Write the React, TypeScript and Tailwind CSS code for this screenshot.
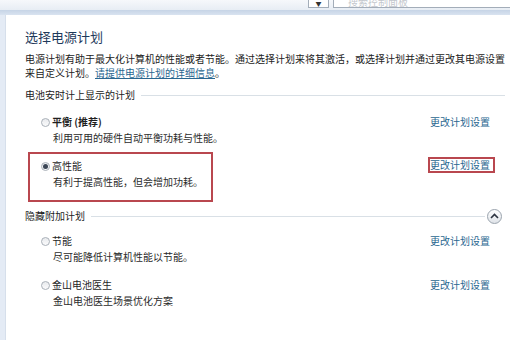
import React from "react"

const FONT = "font-['Microsoft_YaHei','Noto_Sans_CJK_SC',sans-serif]"

function Radio({ checked }: { checked?: boolean }) {
    return (
        <span className="flex items-center justify-center w-[9px] h-[9px] rounded-full border border-[#a9b0b8] bg-gradient-to-b from-[#e8eaed] to-[#fbfbfc] shrink-0">
            {checked && <span className="w-[5px] h-[5px] rounded-full bg-[#3b4656]" />}
        </span>
    )
}

function PlanLink({ boxed }: { boxed?: boolean }) {
    return (
        <span
            className={
                boxed
                    ? "block text-[10px] leading-[12px] text-[#2a6790] border-2 border-[#b9474f] pr-[3px]"
                    : "block text-[10px] leading-[14px] text-[#2a6790]"
            }
        >
            更改计划设置
        </span>
    )
}

function Plan({ name, desc, checked, bold }: { name: string; desc: string; checked?: boolean; bold?: boolean }) {
    return (
        <div className="flex flex-col">
            <div className="flex items-center gap-[2px] h-[14px]">
                <Radio checked={checked} />
                <span className={`text-[10px] leading-[14px] text-[#1f1f1f] ${bold ? 'font-bold' : ''}`}>{name}</span>
            </div>
            <div className="mt-[2px] pl-[12px] text-[10px] leading-[14px] text-[#2b2b2b] whitespace-nowrap">{desc}</div>
        </div>
    )
}

export default function App() {
    return (
        <div className={`w-[510px] h-[340px] overflow-hidden bg-white flex flex-col ${FONT}`}>
            {/* window chrome: address / search strip */}
            <div className="h-[10px] flex bg-gradient-to-b from-[#f6f8fb] to-[#e7edf4] shrink-0">
                <div className="flex-1" />
                <div className="w-[21px] h-[9px] mt-[-1px] border border-[#a3adb9] bg-white flex items-end justify-center">
                    <span className="text-[6px] leading-[6px] text-[#333]">▼</span>
                </div>
                <div className="w-[4px]" />
                <div className="w-[177px] h-[9px] mt-[-1px] border border-[#a3adb9] border-r-0 bg-white overflow-hidden pl-[14px]">
                    <span className="block text-[10px] leading-[10px] mt-[-3px] text-[#c3c7cd]">搜索控制面板</span>
                </div>
            </div>
            <div className="h-[5px] bg-gradient-to-b from-[#c6d4e6] to-[#d9e3f0] shrink-0" />

            <div className="flex flex-1">
                <div className="w-[6px] bg-[#e4ebf5] border-r border-[#d6dfeb] shrink-0" />
                <div className="flex-1 flex flex-col pl-[19px] pr-[5px]">
                    <h1 className="mt-[14px] text-[13px] leading-[16px] text-[#1e395b]">选择电源计划</h1>
                    <p className="mt-[7px] text-[10px] leading-[14px] text-[#222] whitespace-nowrap">
                        电源计划有助于最大化计算机的性能或者节能。通过选择计划来将其激活，或选择计划并通过更改其电源设置
                        <br />
                        来自定义计划。<span className="text-[#2a6790] underline">请提供电源计划的详细信息</span>。
                    </p>

                    <div className="mt-[8px] flex items-center h-[14px]">
                        <span className="text-[10px] leading-[14px] text-[#222]">电池安时计上显示的计划</span>
                        <div className="flex-1 ml-[6px] h-px bg-[#d9e0e6]" />
                    </div>

                    <div className="mt-[13px] flex items-start pl-[16px] pr-[15px]">
                        <div className="flex-1">
                            <Plan name="平衡 (推荐)" desc="利用可用的硬件自动平衡功耗与性能。" bold />
                        </div>
                        <PlanLink />
                    </div>

                    <div className="mt-[7px] flex items-start pr-[10px]">
                        <div className="flex-1 flex">
                            <div className="ml-[3px] w-[185px] border-2 border-[#b9474f] pl-[11px] pt-[5px] pb-[11px]">
                                <Plan name="高性能" desc="有利于提高性能，但会增加功耗。" checked />
                            </div>
                        </div>
                        <div className="flex mt-[5px]">
                            <PlanLink boxed />
                        </div>
                    </div>

                    <div className="mt-[7px] flex items-center h-[14px]">
                        <span className="text-[10px] leading-[14px] text-[#222]">隐藏附加计划</span>
                        <div className="flex-1 ml-[6px] h-px bg-[#d9e0e6]" />
                        <div className="ml-[2px] w-[15px] h-[15px] rounded-full border border-[#9aa3ad] bg-gradient-to-b from-[#ffffff] to-[#dfe3e8] flex items-center justify-center shrink-0">
                            <svg width="9" height="6" viewBox="0 0 9 6" fill="none" stroke="#2d3440" strokeWidth="1.6">
                                <path d="M1 5 L4.5 1.5 L8 5" />
                            </svg>
                        </div>
                        <div className="w-[3px]" />
                    </div>

                    <div className="mt-[11px] flex items-start pl-[16px] pr-[15px]">
                        <div className="flex-1">
                            <Plan name="节能" desc="尽可能降低计算机性能以节能。" />
                        </div>
                        <PlanLink />
                    </div>

                    <div className="mt-[14px] flex items-start pl-[16px] pr-[15px]">
                        <div className="flex-1">
                            <Plan name="金山电池医生" desc="金山电池医生场景优化方案" />
                        </div>
                        <PlanLink />
                    </div>
                </div>
            </div>
        </div>
    )
}
